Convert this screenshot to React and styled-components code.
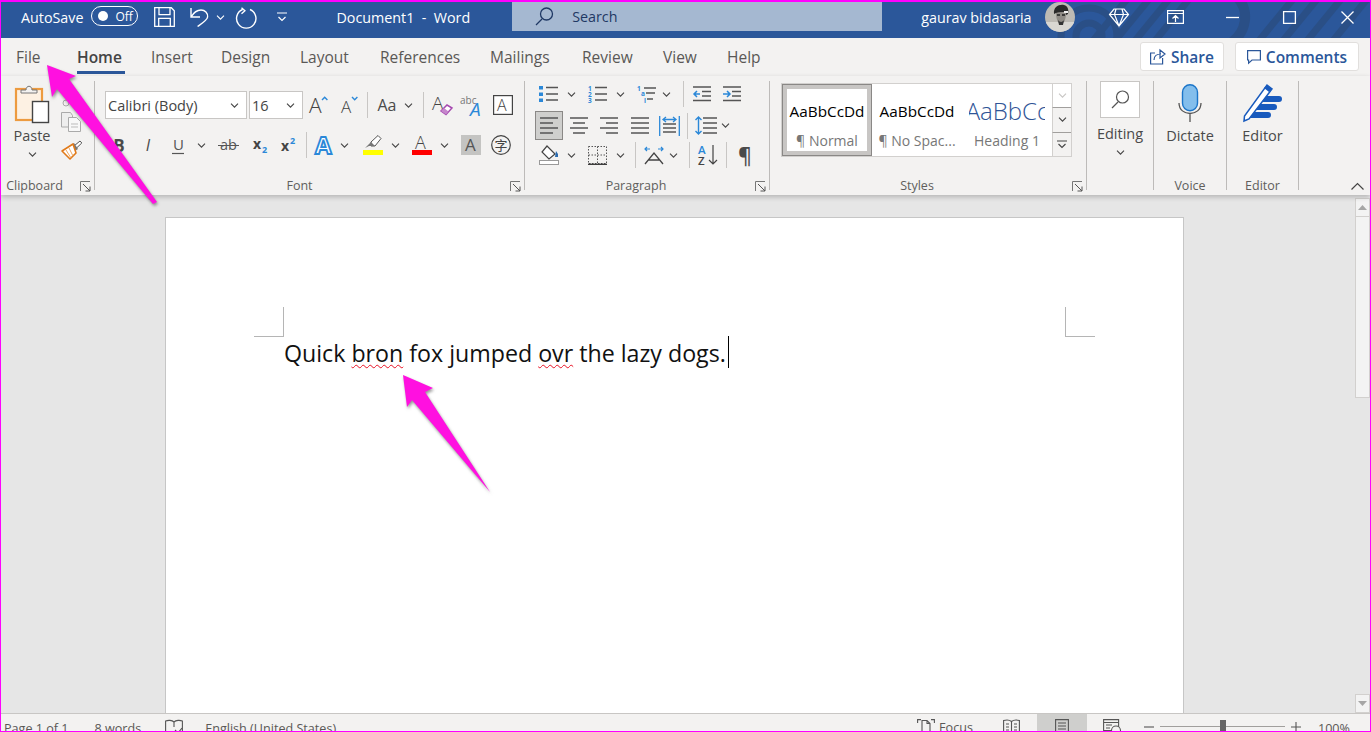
import React from 'react';
import styled, { createGlobalStyle } from 'styled-components';

const UI_FONT = '"Open Sans", "Noto Sans", sans-serif';
const BLUE = '#2B579A';
const ACCENT = '#2B88D8';
const INK = '#4a4a4a';

const GlobalStyle = createGlobalStyle`
  html, body {
    margin: 0;
    padding: 0;
    background: #fff;
  }
  * {
    box-sizing: border-box;
  }
`;

const Frame = styled.div`
  width: 1371px;
  height: 732px;
  position: relative;
  display: flex;
  flex-direction: column;
  overflow: hidden;
  border: 1px solid #f0f;
  border-top-width: 2px;
  font-family: ${UI_FONT};
  color: ${INK};
  background: #e6e6e6;
`;

/* title bar */
const TitleBar = styled.div`
  position: relative;
  height: 36px;
  flex: none;
  display: flex;
  align-items: flex-start;
  background: ${BLUE};
  color: #fff;
  font-size: 14.3px;
`;

const TitleDecor = styled.svg`
  position: absolute;
  right: 0;
  top: 0;
`;

const TitleItem = styled.div`
  position: relative;
  flex: none;
  display: flex;
  align-items: center;
  justify-content: center;
  height: 30px;
  width: ${(p) => (p.$w ? `${p.$w}px` : 'auto')};
  margin-left: ${(p) => p.$ml || 0}px;
  white-space: nowrap;
`;

const Toggle = styled.div`
  position: relative;
  flex: none;
  margin: 4px 0 0 8px;
  width: 47px;
  height: 20px;
  border: 1px solid #fff;
  border-radius: 10px;
  display: flex;
  align-items: center;
  padding-left: 6px;
  gap: 7px;
  font-size: 12px;
`;

const ToggleKnob = styled.span`
  width: 10px;
  height: 10px;
  border-radius: 50%;
  background: #fff;
`;

const SearchBox = styled.div`
  position: relative;
  flex: none;
  margin-left: 42px;
  width: 370px;
  height: 29px;
  background: #a5b8d1;
  color: #1f3864;
  display: flex;
  align-items: center;
  padding-left: 23px;
  gap: 18px;
  font-size: 14.3px;
`;

const Avatar = styled.div`
  position: relative;
  flex: none;
  width: 30px;
  height: 30px;
  margin-left: 13px;
  border-radius: 50%;
  overflow: hidden;
`;

/* tabs */
const TabRow = styled.div`
  height: 38px;
  flex: none;
  display: flex;
  background: #f3f2f1;
  padding-left: 15px;
`;

const Tab = styled.div`
  position: relative;
  flex: none;
  width: ${(p) => p.$w}px;
  height: 36px;
  margin-right: ${(p) => p.$gap}px;
  padding-top: 7px;
  font-size: 15.5px;
  line-height: 24px;
  white-space: nowrap;
  font-weight: ${(p) => (p.$active ? 600 : 400)};
  color: ${(p) => (p.$active ? '#444' : '#5a5856')};
  border-bottom: 3px solid ${(p) => (p.$active ? BLUE : 'transparent')};
`;

const TabActions = styled.div`
  margin-left: auto;
  margin-right: 11px;
  padding-top: 4px;
  display: flex;
  gap: 11px;
`;

const ActionButton = styled.div`
  width: ${(p) => p.$w}px;
  height: 29px;
  display: flex;
  align-items: center;
  justify-content: center;
  gap: 5px;
  background: #fff;
  border: 1px solid #e1dfdd;
  border-radius: 3px;
  color: ${BLUE};
  font-size: 15.5px;
  font-weight: 600;
`;

/* ribbon */
const Ribbon = styled.div`
  position: relative;
  z-index: 1;
  height: 119px;
  flex: none;
  display: flex;
  padding: 5px 0;
  background: #f3f2f1;
  box-shadow: 0 2px 5px rgba(0, 0, 0, 0.22);
`;

const Group = styled.div`
  flex: none;
  width: ${(p) => p.$w}px;
  height: 109px;
  display: flex;
  flex-direction: column;
  border-right: 1px solid #bdbbb9;
`;

const GroupBody = styled.div`
  flex: 1;
  min-height: 0;
  display: flex;
  flex-direction: ${(p) => p.$dir || 'column'};
  align-items: ${(p) => p.$align || 'stretch'};
`;

const GroupFooter = styled.div`
  flex: none;
  height: 18px;
  margin-bottom: -5px;
  display: flex;
  align-items: center;
`;

const GroupLabel = styled.div`
  flex: 1;
  text-align: center;
  font-size: 12.5px;
  line-height: 18px;
  color: #605e5c;
  padding-right: ${(p) => p.$pr || 0}px;
`;

const Launcher = styled.svg`
  flex: none;
  margin-right: ${(p) => p.$mr || 3}px;
`;

const ToolRow = styled.div`
  display: flex;
  align-items: center;
  height: ${(p) => p.$h}px;
  margin-top: ${(p) => p.$mt || 0}px;
`;

const Slot = styled.div`
  flex: none;
  display: flex;
  align-items: center;
  justify-content: center;
  width: ${(p) => p.$w}px;
  height: ${(p) => p.$h || 26}px;
  margin-left: ${(p) => p.$ml || 0}px;
  background: ${(p) => p.$bg || 'transparent'};
  border: ${(p) => (p.$active ? '1px solid #8a8886' : 'none')};
  font-size: ${(p) => p.$size || 15}px;
  font-weight: ${(p) => p.$weight || 400};
  font-style: ${(p) => (p.$italic ? 'italic' : 'normal')};
  color: ${(p) => p.$color || INK};
  white-space: nowrap;
`;

const RowSep = styled.div`
  flex: none;
  width: 1px;
  height: ${(p) => p.$h || 26}px;
  margin-left: ${(p) => p.$ml || 0}px;
  background: #c8c6c4;
`;

const FontSelect = styled.div`
  flex: none;
  width: ${(p) => p.$w}px;
  height: 28px;
  margin-left: ${(p) => p.$ml || 0}px;
  display: flex;
  align-items: center;
  justify-content: space-between;
  padding: 0 7px 0 2px;
  background: #fff;
  border: 1px solid #c8c6c4;
  font-size: 14.5px;
  color: #444;
`;

const StackColumn = styled.div`
  flex: none;
  display: flex;
  flex-direction: column;
  align-items: center;
  width: ${(p) => p.$w}px;
  margin-left: ${(p) => p.$ml || 0}px;
  padding-top: ${(p) => p.$pt || 0}px;
`;

const BigLabel = styled.div`
  font-size: 14.5px;
  line-height: 20px;
  color: ${INK};
  margin-top: ${(p) => p.$mt || 0}px;
`;

const SearchTile = styled.div`
  width: 40px;
  height: 37px;
  display: flex;
  align-items: center;
  justify-content: center;
  background: #fff;
  border: 1px solid #c8c6c4;
`;

const Gallery = styled.div`
  display: flex;
  width: 291px;
  height: 74px;
  margin: 2px 0 0 11px;
  background: #fff;
  border: 1px solid #d2d0ce;
`;

const StyleCard = styled.div`
  flex: none;
  width: ${(p) => p.$w}px;
  margin-left: ${(p) => p.$ml || 0}px;
  overflow: hidden;
  display: flex;
  flex-direction: column;
  align-items: center;
  background: #fff;
  padding-top: ${(p) => (p.$selected ? 14 : 15)}px;
  border: ${(p) => (p.$selected ? '1px solid #8a8886' : 'none')};
  outline: ${(p) => (p.$selected ? '4px solid #c8c6c4' : 'none')};
  outline-offset: -5px;
`;

const StyleSample = styled.div`
  height: 24px;
  line-height: 24px;
  white-space: nowrap;
  font-size: ${(p) => p.$size || 15.3}px;
  font-weight: ${(p) => p.$weight || 400};
  color: ${(p) => p.$color || '#000'};
`;

const StyleName = styled.div`
  margin-top: 8px;
  line-height: 20px;
  font-size: 14px;
  white-space: nowrap;
  color: #777;
`;

const GalleryScroll = styled.div`
  flex: none;
  margin-left: auto;
  width: 19px;
  display: flex;
  flex-direction: column;
`;

const GalleryButton = styled.div`
  flex: 1;
  display: flex;
  align-items: center;
  justify-content: center;
  border-left: 1px solid #d2d0ce;
  border-top: ${(p) => (p.$first ? 'none' : '1px solid #a19f9d')};
  background: ${(p) => (p.$first ? '#fff' : '#f3f2f1')};
`;

const CollapseZone = styled.div`
  flex: 1;
  display: flex;
  justify-content: flex-end;
  align-items: flex-end;
  padding: 0 6px 0 0;
`;

/* document */
const Workspace = styled.div`
  flex: 1;
  min-height: 0;
  display: flex;
  overflow: hidden;
`;

const PageArea = styled.div`
  flex: 1;
  padding: 22px 0 0 164px;
`;

const Page = styled.div`
  width: 1019px;
  height: 520px;
  background: #fff;
  border: 1px solid #c6c6c6;
  padding: 89px 88px 0;
`;

const CropRow = styled.div`
  display: flex;
  justify-content: space-between;
`;

const CropMark = styled.div`
  width: 30px;
  height: 30px;
  border-bottom: 1px solid #b5b5b5;
  border-right: ${(p) => (p.$side === 'left' ? '1px solid #b5b5b5' : 'none')};
  border-left: ${(p) => (p.$side === 'right' ? '1px solid #b5b5b5' : 'none')};
`;

const BodyText = styled.div`
  padding-left: 30px;
  margin-top: -1px;
  height: 34px;
  display: flex;
  align-items: center;
  font-size: 23.2px;
  line-height: 34px;
  color: #111;
  white-space: pre;
`;

const Misspelled = styled.span`
  text-decoration: underline wavy #e81123 1px;
  text-underline-offset: 2px;
`;

const Caret = styled.span`
  width: 1px;
  height: 32px;
  margin: -2px 0 0 2px;
  background: #000;
`;

const ScrollBar = styled.div`
  flex: none;
  width: 15px;
  padding-top: 3px;
  display: flex;
  flex-direction: column;
`;

const ScrollArrow = styled.div`
  flex: none;
  height: 19px;
  display: flex;
  align-items: center;
  justify-content: center;
  background: #f3f3f3;
  border: 1px solid #d2d0ce;
`;

const ScrollThumb = styled.div`
  flex: none;
  height: 181px;
  background: #f3f3f3;
  border: 1px solid #d2d0ce;
  border-top: none;
`;

const ScrollTrack = styled.div`
  flex: 1;
`;

/* status bar */
const StatusBar = styled.div`
  height: 18px;
  flex: none;
  display: flex;
  overflow: hidden;
  background: #f3f2f1;
  border-top: 1px solid #c8c6c4;
  font-size: 12.6px;
  color: #5a5856;
`;

const StatusItem = styled.div`
  flex: none;
  display: flex;
  align-items: flex-start;
  gap: 4px;
  height: 30px;
  padding-top: ${(p) => (p.$icon ? 5 : 6)}px;
  line-height: 17px;
  margin-left: ${(p) => p.$ml || 0}px;
  white-space: nowrap;
`;

const ViewButton = styled.div`
  flex: none;
  width: ${(p) => p.$w}px;
  height: 18px;
  margin-left: ${(p) => p.$ml || 0}px;
  display: flex;
  justify-content: center;
  padding-top: 5px;
  background: ${(p) => (p.$active ? '#cfcfcd' : 'transparent')};
`;

const ZoomTrack = styled.div`
  position: relative;
  flex: none;
  width: 125px;
  height: 1px;
  margin: 12px 0 0 6px;
  background: #a19f9d;
`;

const ZoomThumb = styled.div`
  position: absolute;
  left: 60px;
  top: -6px;
  width: 6px;
  height: 14px;
  background: #666;
`;

/* annotations */
const Annotations = styled.svg`
  position: absolute;
  left: -1px;
  top: -2px;
  z-index: 5;
  pointer-events: none;
  filter: drop-shadow(1px 2px 1.5px rgba(60, 60, 60, 0.55));
`;

const Svg = styled.svg`
  display: block;
  flex: none;
  overflow: visible;
`;

const Chevron = ({ color = '#444' }) => (
  <Svg width="9" height="5" viewBox="0 0 9 5">
    <path d="M1 .7l3.5 3.5L8 .7" fill="none" stroke={color} strokeWidth="1.1" />
  </Svg>
);

const Corner = ({ mr }) => (
  <Launcher $mr={mr} width="11" height="11" viewBox="0 0 11 11">
    <path d="M.5 10V.5H10" fill="none" stroke="#777" />
    <path d="M3 3l7 7M10 5.5V10H5.5" fill="none" stroke="#555" />
  </Launcher>
);

const Strokes = ({ w, h, d, color = '#555', width = 1.3, children }) => (
  <Svg width={w} height={h} viewBox={`0 0 ${w} ${h}`}>
    <path d={d} fill="none" stroke={color} strokeWidth={width} />
    {children}
  </Svg>
);

const LetterA = ({ x, y, size = 20, fill = '#444', weight = 300 }) => (
  <text x={x} y={y} fontFamily={UI_FONT} fontSize={size} fontWeight={weight} fill={fill}>
    A
  </text>
);

const SaveIcon = () => (
  <Strokes w={21} h={20} color="#fff" d="M.7.7h16.6l3 3v15.6H.7zM5 .7v7h11v-7M4.7 19.3v-8h11.6v8" />
);

const UndoIcon = () => (
  <Strokes w={20} h={20} color="#fff" width={1.4} d="M2 1v9h9M2 10c3-5 6-7 10-7 4 0 7 3 6.600 7-.3 3-5 6-10 9.500" />
);

const RedoIcon = () => (
  <Strokes w={22} h={21} color="#fff" width={1.4} d="M14 2.500a9.700 9.700 0 1 1-7.500 0M5.500 .8l3.400 3-3.400 3" />
);

const CustomizeIcon = () => (
  <Strokes w={10} h={10} color="#fff" width={1.2} d="M0 1h10M1.500 5l3.500 3.500L8.500 5" />
);

const CustomizeIconDark = () => (
  <Strokes w={10} h={9} color="#444" width={1.1} d="M0 1h10M1.500 4l3.500 3.500L8.500 4" />
);

const SearchIcon = () => (
  <Strokes w={19} h={19} color="#1f3864" width={1.3} d="M1 18l6-6">
    <circle cx="11.500" cy="7" r="6" fill="none" stroke="#1f3864" strokeWidth="1.300" />
  </Strokes>
);

const DiamondIcon = () => (
  <Strokes w={20} h={19} color="#fff" width={1.2} d="M5 1h10l4.500 5.500L10 18 .5 6.500zM.5 6.500h19M7 1L5.500 6.500 10 18l4.500-11.500L13 1" />
);

const DisplayIcon = () => (
  <Strokes w={17} h={14} color="#fff" width={1.2} d="M.6.6h15.800v12.800H.6zM.6 3.500h15.800M8.500 12V6M5.500 8.500l3-3 3 3" />
);

const WindowControl = ({ kind }) => {
  if (kind === 'min') return <Strokes w={13} h={13} color="#fff" d="M0 6.500h13" />;
  if (kind === 'max') return <Strokes w={13} h={13} color="#fff" d="M.6.6h11.800v11.800H.6z" />;
  return <Strokes w={13} h={13} color="#fff" d="M.5.500l12 12M12.500.5l-12 12" />;
};

const AvatarArt = () => (
  <Svg width="30" height="30" viewBox="0 0 30 30">
    <rect width="30" height="30" fill="#bdbab4" />
    <rect x="0" y="20" width="30" height="10" fill="#d9d7d2" />
    <path d="M9 12C8 5 14 2 19 3c4 1 5 5 4 9l-2 1-1-3-9 1z" fill="#2a2a2a" />
    <path d="M11 11c3-1 7-1 10 0 0 6-2 11-5 11-3 0-5-5-5-11z" fill="#8f8b85" />
    <path d="M13 18c2 3 5 2 6 0l-1 5h-4z" fill="#333" />
    <path d="M12 13h3M17 13h3" stroke="#222" strokeWidth="1.500" />
    <rect x="19" y="9" width="4" height="2" fill="#eee" />
  </Svg>
);

const ShareIcon = () => (
  <Strokes w={16} h={16} color={BLUE} width={1.2} d="M5 4H.6v11h12V9M4 11c0-4 3-6 7-6M10 1l5 4-5 4z" />
);

const CommentIcon = () => (
  <Strokes w={14} h={14} color={BLUE} width={1.2} d="M.6.6h12.800v9.400H5L1.600 13.200V10H.6z" />
);

const PasteIcon = () => (
  <Svg width="34" height="38" viewBox="0 0 34 38">
    <rect x="1" y="4" width="26" height="31" fill="#fdf1e3" stroke="#ed9b40" strokeWidth="2.200" />
    <path d="M6 8V5h5c0-5 6-5 6 0h5v3z" fill="#f3f2f1" stroke="#777" />
    <rect x="17.500" y="16.500" width="16" height="21" fill="#fff" stroke="#444" strokeWidth="1.400" />
  </Svg>
);

const CutIcon = () => (
  <Strokes w={20} h={20} color="#aaa" d="M6 1l8 11M14 1L6 12">
    <circle cx="5" cy="15" r="3" fill="none" stroke="#aaa" />
    <circle cx="15" cy="15" r="3" fill="none" stroke="#aaa" />
  </Strokes>
);

const CopyIcon = () => (
  <Svg width="20" height="20" viewBox="0 0 20 20">
    <path d="M.5.500h9l2 3V15H.5z" fill="#eee" stroke="#aaa" />
    <path d="M7.500 5.500h8l4 4v10h-12z" fill="#f8f8f8" stroke="#aaa" />
    <path d="M10 12h7M10 15h7" stroke="#bbb" />
  </Svg>
);

const BrushIcon = () => (
  <Svg width="21" height="19" viewBox="0 0 21 19">
    <path d="M13 5l6-5 1.800 2-5.800 5.500z" fill="#fff" stroke="#555" />
    <path d="M10 4l3-2 4 6-3 2z" fill="#777" />
    <path d="M1 10l11-7 3 9-6 6z" fill="#fff" stroke="#e07a1a" strokeWidth="1.600" strokeLinejoin="round" />
    <path d="M5 9l5 8M8 7l4 8" stroke="#f0a860" />
  </Svg>
);

const GrowFont = () => (
  <Svg width="20" height="20" viewBox="0 0 20 20">
    <LetterA x={0} y={18} size={21} />
    <path d="M13 5l2.700-2.700L18.400 5" fill="none" stroke={ACCENT} strokeWidth="1.400" />
  </Svg>
);

const ShrinkFont = () => (
  <Svg width="18" height="18" viewBox="0 0 18 18">
    <LetterA x={0} y={17} size={17} />
    <path d="M11 1l2.700 2.700L16.400 1" fill="none" stroke={ACCENT} strokeWidth="1.400" />
  </Svg>
);

const ClearFormat = () => (
  <Svg width="21" height="21" viewBox="0 0 21 21">
    <LetterA x={0} y={15} size={19} />
    <path d="M9 16l6-6 5 3-6 6.500z" fill="#fff" stroke="#a64ab0" strokeWidth="1.500" />
    <path d="M9 16l3-3 4.500 3.500-2.500 3z" fill="#c586cc" />
  </Svg>
);

const TextEffect = () => (
  <Svg width="22" height="21" viewBox="0 0 22 21">
    <text x="0" y="9" fontFamily={UI_FONT} fontSize="10" fill="#777">abc</text>
    <text x="10" y="21" fontFamily={UI_FONT} fontSize="19" fontStyle="italic" fill={ACCENT}>A</text>
  </Svg>
);

const BoxedA = () => (
  <Svg width="20" height="20" viewBox="0 0 20 20">
    <rect x=".6" y=".6" width="18.800" height="18.800" fill="#fff" stroke="#444" strokeWidth="1.200" />
    <LetterA x={4} y={16} size={16} />
  </Svg>
);

const SubScript = () => (
  <Svg width="16" height="18" viewBox="0 0 16 18">
    <text x="0" y="13" fontFamily={UI_FONT} fontSize="14" fontWeight="700" fill="#444">x</text>
    <text x="9" y="17" fontFamily={UI_FONT} fontSize="9" fontWeight="700" fill={ACCENT}>2</text>
  </Svg>
);

const SuperScript = () => (
  <Svg width="16" height="18" viewBox="0 0 16 18">
    <text x="0" y="15" fontFamily={UI_FONT} fontSize="14" fontWeight="700" fill="#444">x</text>
    <text x="9" y="8" fontFamily={UI_FONT} fontSize="9" fontWeight="700" fill={ACCENT}>2</text>
  </Svg>
);

const Strike = () => (
  <Svg width="21" height="16" viewBox="0 0 21 16">
    <text x="2" y="13" fontFamily={UI_FONT} fontSize="14.500" fill="#555">ab</text>
    <path d="M0 8.500h21" stroke="#555" />
  </Svg>
);

const Underlined = () => (
  <Svg width="12" height="19" viewBox="0 0 12 19">
    <text x="1" y="14" fontFamily={UI_FONT} fontSize="15" fill="#555">U</text>
    <path d="M0 17.500h12" stroke="#555" strokeWidth="1.200" />
  </Svg>
);

const OutlinedA = () => (
  <Svg width="20" height="20" viewBox="0 0 20 20">
    <text x="0" y="19" fontFamily={UI_FONT} fontSize="24" fontWeight="700" fill="#fff" stroke={ACCENT} strokeWidth="1.800">A</text>
  </Svg>
);

const Highlight = () => (
  <Svg width="20" height="20" viewBox="0 0 20 20">
    <path d="M8 7l7-6.500 3 3L12 11H8z" fill="#fff" stroke="#555" />
    <path d="M2 13l6-6 4 4H6z" fill="#777" />
    <rect y="15" width="20" height="5" fill="#ff0" />
  </Svg>
);

const FontColor = () => (
  <Svg width="20" height="20" viewBox="0 0 20 20">
    <LetterA x={3} y={14} size={18} />
    <rect y="15" width="20" height="5" fill="#f00" />
  </Svg>
);

const Shaded = () => (
  <Svg width="20" height="20" viewBox="0 0 20 20">
    <rect width="20" height="20" fill="#c4c4c2" />
    <LetterA x={4} y={16} size={17} weight={400} fill="#555" />
  </Svg>
);

const Enclosed = () => (
  <Svg width="20" height="20" viewBox="0 0 20 20">
    <circle cx="10" cy="10" r="9.300" fill="none" stroke="#444" strokeWidth="1.200" />
    <text x="3.500" y="15" fontFamily='"Noto Sans CJK SC", sans-serif' fontSize="13" fill="#444">字</text>
  </Svg>
);

const ListIcon = ({ kind }) => (
  <Svg width="20" height="19" viewBox="0 0 20 19">
    <path d={kind === 'multi' ? 'M7 3h12M9 8h9M10 14h6' : 'M7 2.500h12M7 9h12M7 15h12'} stroke="#555" strokeWidth="1.300" fill="none" />
    {kind === 'bullet' && (
      <path d="M0 1h4v3.500H0zM0 7.500h4V11H0zM0 13.500h4V17H0z" fill={ACCENT} />
    )}
    {kind === 'number' && (
      <>
        <text x="0" y="6" fontFamily={UI_FONT} fontWeight="700" fontSize="6.500" fill={ACCENT}>1</text>
        <text x="0" y="12" fontFamily={UI_FONT} fontWeight="700" fontSize="6.500" fill={ACCENT}>2</text>
        <text x="0" y="18" fontFamily={UI_FONT} fontWeight="700" fontSize="6.500" fill={ACCENT}>3</text>
      </>
    )}
    {kind === 'multi' && (
      <>
        <text x="0" y="6" fontFamily={UI_FONT} fontWeight="700" fontSize="6.500" fill={ACCENT}>1</text>
        <text x="4" y="11" fontFamily={UI_FONT} fontWeight="700" fontSize="6.500" fill={ACCENT}>a</text>
        <text x="7" y="18" fontFamily={UI_FONT} fontWeight="700" fontSize="6.500" fill={ACCENT}>i</text>
      </>
    )}
  </Svg>
);

const IndentIcon = ({ forward }) => (
  <Svg width="18" height="16" viewBox="0 0 18 16">
    <path d="M0 1.500h18M9 6h9M9 10.500h9M0 15h18" stroke="#555" strokeWidth="1.300" fill="none" transform="translate(0 -.5)" />
    <path
      d={forward ? 'M0 8h6M4 5l3 3-3 3' : 'M7 8H1M4 5L1 8l3 3'}
      stroke={ACCENT}
      strokeWidth="1.500"
      fill="none"
    />
  </Svg>
);

const ALIGN_PATHS = {
  left: 'M0 1h18M0 6h13M0 11h18M0 16h13',
  center: 'M0 1h18M3 6h12M0 11h18M3 16h12',
  right: 'M0 1h18M6 6h12M0 11h18M6 16h12',
  justify: 'M0 1h18M0 6h18M0 11h18M0 16h18',
};

const AlignIcon = ({ kind, w = 18 }) => (
  <Strokes w={w} h={17} color="#555" width={1.4} d={ALIGN_PATHS[kind]} />
);

const Distributed = () => (
  <Svg width="21" height="20" viewBox="0 0 21 20">
    <path d="M4 8h13M4 12h13M4 16h13" stroke="#555" strokeWidth="1.300" />
    <path d="M.7 0v20M20.300 0v20M4 3.500h13M7 1L4 3.500 7 6M14 1l3 2.500L14 6" stroke={ACCENT} strokeWidth="1.300" fill="none" />
  </Svg>
);

const LineSpacing = () => (
  <Svg width="22" height="19" viewBox="0 0 22 19">
    <path d="M8 2h14M8 7h14M8 12h14M8 17h14" stroke="#555" strokeWidth="1.300" />
    <path d="M3.500 1v17M.5 4l3-3 3 3M.5 15l3 3 3-3" stroke={ACCENT} strokeWidth="1.400" fill="none" />
  </Svg>
);

const Shading = () => (
  <Svg width="20" height="20" viewBox="0 0 20 20">
    <path d="M8 1l8 8-6 5-7-7z" fill="#fff" stroke="#444" strokeWidth="1.200" />
    <path d="M17 6l2 3v3h-3z" fill="#2b6cb0" />
    <rect x=".5" y="15.500" width="19" height="4" fill="#fff" stroke="#999" />
  </Svg>
);

const BordersIcon = () => (
  <Svg width="19" height="19" viewBox="0 0 19 19">
    <path d="M.5.500h18v17H.5zM9.500.5v17M.5 9h18" fill="none" stroke="#555" strokeDasharray="1.500 1.500" />
    <path d="M0 18.300h19" stroke="#333" strokeWidth="1.300" />
  </Svg>
);

const AsianLayout = () => (
  <Svg width="20" height="19" viewBox="0 0 20 19">
    <path d="M1 18L10 7l9 11M4 14h12" stroke="#444" strokeWidth="1.300" fill="none" />
    <path d="M1 3h5M3 1L1 3l2 2M14 3h5M17 1l2 2-2 2" stroke={ACCENT} strokeWidth="1.200" fill="none" />
  </Svg>
);

const SortIcon = () => (
  <Svg width="21" height="22" viewBox="0 0 21 22">
    <text x="0" y="10" fontFamily={UI_FONT} fontSize="11.500" fontWeight="600" fill={ACCENT}>A</text>
    <text x="0" y="21" fontFamily={UI_FONT} fontSize="11.500" fontWeight="600" fill="#444">Z</text>
    <path d="M15 1v19M11 16l4 4 4-4" stroke="#444" strokeWidth="1.200" fill="none" />
  </Svg>
);

const MagnifierIcon = () => (
  <Strokes w={19} h={19} color="#555" width={1.2} d="M1 18l6-6">
    <circle cx="11.500" cy="7" r="6" fill="none" stroke="#555" strokeWidth="1.200" />
  </Strokes>
);

const MicIcon = () => (
  <Svg width="24" height="39" viewBox="0 0 24 39">
    <rect x="4.500" y=".7" width="15" height="26" rx="7.500" fill="#83beec" stroke="#1b75c9" strokeWidth="1.400" />
    <path d="M1 19c0 14 22 14 22 0M12 29v9" fill="none" stroke="#555" strokeWidth="1.300" />
  </Svg>
);

const EditorIcon = () => (
  <Svg width="40" height="39" viewBox="0 0 40 39">
    <path d="M19 12h17a2.500 2.500 0 0 1 0 6H15zM13 20h18a2.500 2.500 0 0 1 0 6H9zM7 28h18a2.500 2.500 0 0 1 0 6H3z" fill="#185abd" />
    <path d="M24 1l5 4L6 35l-5 2 .5-5z" fill="#fff" stroke="#185abd" strokeWidth="1.500" />
    <path d="M24 1l5 4-3 3-5-4z" fill="#185abd" />
  </Svg>
);

const Triangle = ({ up }) => (
  <Svg width="9" height="5" viewBox="0 0 9 5">
    <path d={up ? 'M0 5l4.500-5L9 5z' : 'M0 0l4.500 5L9 0z'} fill="#a6a6a6" />
  </Svg>
);

const ProofIcon = () => (
  <Strokes w={18} h={16} color="#555" width={1.1} d="M9 3C7 1 3 1 .6 2v12c3-1 6-1 8.400 1 2-2 5-2 8.400-1V2C15 1 11 1 9 3zM9 3v5M10 11l3 3 4-5" />
);

const FocusIcon = () => (
  <Strokes w={18} h={16} color="#555" width={1.1} d="M.6 4V.6H4M14 .6h3.400V4M5 1.500h5l3 3V16H5zM10 1.500v3h3" />
);

const ReadIcon = () => (
  <Strokes w={17} h={15} color="#555" width={1.1} d="M8.500 2.500C6.500 .8 3 .8.600 1.500v13h7.900M8.500 2.500c2-1.700 5.500-1.700 7.900-1v13H8.500zM8.500 2.500v12M3 5h3M3 8h3M3 11h3M11 5h3M11 8h3M11 11h3" />
);

const PrintIcon = () => (
  <Strokes w={14} h={15} color="#555" width={1.1} d="M.6.600h12.800v14H.6zM3 4h8M3 7h8M3 10h8" />
);

const WebIcon = () => (
  <Strokes w={18} h={15} color="#555" width={1.1} d="M.6.600h15v11H.6zM.6 3.500h15M3 6h6M3 9h4">
    <circle cx="13" cy="11.500" r="4.500" fill="#f3f2f1" stroke="#555" strokeWidth="1.100" />
  </Strokes>
);

const TABS = [
  { name: 'File', w: 26, gap: 35 },
  { name: 'Home', w: 48, gap: 26, active: true },
  { name: 'Insert', w: 44, gap: 26 },
  { name: 'Design', w: 53, gap: 26 },
  { name: 'Layout', w: 54, gap: 26 },
  { name: 'References', w: 84, gap: 26 },
  { name: 'Mailings', w: 66, gap: 26 },
  { name: 'Review', w: 55, gap: 26 },
  { name: 'View', w: 38, gap: 26 },
  { name: 'Help', w: 36, gap: 0 },
];

const STYLE_CARDS = [
  { sample: 'AaBbCcDd', name: '¶ Normal', w: 90, selected: true },
  { sample: 'AaBbCcDd', name: '¶ No Spac...', w: 80, ml: 5 },
  { sample: 'AaBbCc', name: 'Heading 1', w: 76, ml: 12, size: 24, color: '#2f5496', weight: 300 },
];

export default function App() {
  return (
    <Frame>
      <GlobalStyle />
      <TitleBar>
        <TitleDecor width="492" height="36" viewBox="0 0 492 36">
          <g fill="none" stroke="#2a4f86" strokeWidth="7">
            <circle cx="211" cy="34" r="13" />
            <circle cx="211" cy="34" r="28" />
            <path d="M250-4l-36 44M272-4l-36 44M292-4l-36 44M312-4l-36 44" />
            <path d="M360-4c12 14 8 34-6 44" strokeWidth="10" />
            <path d="M416-4l-36 44M440-4l-36 44M464-4l-36 44M490-4l-36 44" />
          </g>
        </TitleDecor>
        <TitleItem $ml={20}>AutoSave</TitleItem>
        <Toggle>
          <ToggleKnob />
          Off
        </Toggle>
        <TitleItem $ml={16}><SaveIcon /></TitleItem>
        <TitleItem $ml={14}><UndoIcon /></TitleItem>
        <TitleItem $ml={7}><Chevron color="#fff" /></TitleItem>
        <TitleItem $ml={11}><RedoIcon /></TitleItem>
        <TitleItem $ml={19}><CustomizeIcon /></TitleItem>
        <TitleItem $ml={49}>Document1&nbsp; -&nbsp; Word</TitleItem>
        <SearchBox>
          <SearchIcon />
          Search
        </SearchBox>
        <TitleItem $ml={39}>gaurav bidasaria</TitleItem>
        <Avatar><AvatarArt /></Avatar>
        <TitleItem $ml={34}><DiamondIcon /></TitleItem>
        <TitleItem $ml={38}><DisplayIcon /></TitleItem>
        <TitleItem $ml={42}><WindowControl kind="min" /></TitleItem>
        <TitleItem $ml={44}><WindowControl kind="max" /></TitleItem>
        <TitleItem $ml={45}><WindowControl kind="close" /></TitleItem>
      </TitleBar>

      <TabRow>
        {TABS.map((tab) => (
          <Tab key={tab.name} $w={tab.w} $gap={tab.gap} $active={tab.active}>
            {tab.name}
          </Tab>
        ))}
        <TabActions>
          <ActionButton $w={84}><ShareIcon />Share</ActionButton>
          <ActionButton $w={124}><CommentIcon />Comments</ActionButton>
        </TabActions>
      </TabRow>

      <Ribbon>
        <Group $w={94}>
          <GroupBody $dir="row">
            <StackColumn $w={44} $ml={9} $pt={4}>
              <PasteIcon />
              <BigLabel $mt={3}>Paste</BigLabel>
              <Slot $w={12} $h={17}><Chevron /></Slot>
            </StackColumn>
            <StackColumn $w={22} $ml={6} $pt={7}>
              <CutIcon />
              <Slot $w={20} $h={27}><CopyIcon /></Slot>
              <Slot $w={21} $h={31}><BrushIcon /></Slot>
            </StackColumn>
          </GroupBody>
          <GroupFooter>
            <GroupLabel $pr={12}>Clipboard</GroupLabel>
            <Corner />
          </GroupFooter>
        </Group>

        <Group $w={430}>
          <GroupBody>
            <ToolRow $h={28} $mt={10}>
              <FontSelect $w={142} $ml={10}>Calibri (Body)<Chevron /></FontSelect>
              <FontSelect $w={54} $ml={2}>16<Chevron /></FontSelect>
              <Slot $w={32}><GrowFont /></Slot>
              <Slot $w={30}><ShrinkFont /></Slot>
              <RowSep $ml={2} />
              <Slot $w={30} $ml={4} $size={16}>Aa</Slot>
              <Slot $w={12} $ml={0}><Chevron /></Slot>
              <RowSep $ml={9} />
              <Slot $w={24} $ml={6}><ClearFormat /></Slot>
              <Slot $w={24} $ml={5}><TextEffect /></Slot>
              <Slot $w={20} $ml={10}><BoxedA /></Slot>
            </ToolRow>
            <ToolRow $h={30} $mt={11}>
              <Slot $w={28} $ml={10} $weight={700} $size={17}>B</Slot>
              <Slot $w={30} $italic $size={16}>I</Slot>
              <Slot $w={30}><Underlined /></Slot>
              <Slot $w={16}><Chevron /></Slot>
              <Slot $w={38}><Strike /></Slot>
              <Slot $w={28}><SubScript /></Slot>
              <Slot $w={28}><SuperScript /></Slot>
              <RowSep $ml={3} />
              <Slot $w={26} $ml={5}><OutlinedA /></Slot>
              <Slot $w={12}><Chevron /></Slot>
              <Slot $w={26} $ml={10}><Highlight /></Slot>
              <Slot $w={12} $ml={3}><Chevron /></Slot>
              <Slot $w={26} $ml={8}><FontColor /></Slot>
              <Slot $w={12} $ml={3}><Chevron /></Slot>
              <Slot $w={20} $ml={11}><Shaded /></Slot>
              <Slot $w={20} $ml={10}><Enclosed /></Slot>
            </ToolRow>
          </GroupBody>
          <GroupFooter>
            <GroupLabel $pr={6}>Font</GroupLabel>
            <Corner />
          </GroupFooter>
        </Group>

        <Group $w={245}>
          <GroupBody>
            <ToolRow $h={26}>
              <Slot $w={20} $ml={14}><ListIcon kind="bullet" /></Slot>
              <Slot $w={12} $ml={6}><Chevron /></Slot>
              <Slot $w={20} $ml={11}><ListIcon kind="number" /></Slot>
              <Slot $w={12} $ml={6}><Chevron /></Slot>
              <Slot $w={20} $ml={11}><ListIcon kind="multi" /></Slot>
              <Slot $w={12} $ml={3}><Chevron /></Slot>
              <RowSep $ml={11} />
              <Slot $w={18} $ml={9}><IndentIcon /></Slot>
              <Slot $w={18} $ml={12}><IndentIcon forward /></Slot>
            </ToolRow>
            <ToolRow $h={29} $mt={4}>
              <Slot $w={28} $h={29} $ml={10} $active $bg="#cfcfcd"><AlignIcon kind="left" /></Slot>
              <Slot $w={20} $ml={6}><AlignIcon kind="center" /></Slot>
              <Slot $w={20} $ml={10}><AlignIcon kind="right" /></Slot>
              <Slot $w={20} $ml={11}><AlignIcon kind="justify" /></Slot>
              <Slot $w={21} $ml={9}><Distributed /></Slot>
              <RowSep $ml={7} />
              <Slot $w={22} $ml={7}><LineSpacing /></Slot>
              <Slot $w={12} $ml={2}><Chevron /></Slot>
            </ToolRow>
            <ToolRow $h={26} $mt={2}>
              <Slot $w={20} $ml={14}><Shading /></Slot>
              <Slot $w={12} $ml={6}><Chevron /></Slot>
              <Slot $w={19} $ml={11}><BordersIcon /></Slot>
              <Slot $w={12} $ml={7}><Chevron /></Slot>
              <RowSep $ml={9} />
              <Slot $w={20} $ml={8}><AsianLayout /></Slot>
              <Slot $w={12} $ml={3}><Chevron /></Slot>
              <RowSep $ml={10} />
              <Slot $w={21} $ml={8}><SortIcon /></Slot>
              <RowSep $ml={7} />
              <Slot $w={18} $ml={9} $size={21} $weight={600}>¶</Slot>
            </ToolRow>
          </GroupBody>
          <GroupFooter>
            <GroupLabel $pr={8}>Paragraph</GroupLabel>
            <Corner />
          </GroupFooter>
        </Group>

        <Group $w={317}>
          <GroupBody>
            <Gallery>
              {STYLE_CARDS.map((card) => (
                <StyleCard key={card.name} $w={card.w} $ml={card.ml} $selected={card.selected}>
                  <StyleSample $size={card.size} $color={card.color} $weight={card.weight}>
                    {card.sample}
                  </StyleSample>
                  <StyleName>{card.name}</StyleName>
                </StyleCard>
              ))}
              <GalleryScroll>
                <GalleryButton $first><Chevron color="#c8c6c4" /></GalleryButton>
                <GalleryButton><Chevron /></GalleryButton>
                <GalleryButton><CustomizeIconDark /></GalleryButton>
              </GalleryScroll>
            </Gallery>
          </GroupBody>
          <GroupFooter>
            <GroupLabel $pr={8}>Styles</GroupLabel>
            <Corner />
          </GroupFooter>
        </Group>

        <Group $w={67}>
          <GroupBody $align="center">
            <SearchTile><MagnifierIcon /></SearchTile>
            <BigLabel $mt={6}>Editing</BigLabel>
            <Slot $w={12} $h={16}><Chevron /></Slot>
          </GroupBody>
        </Group>

        <Group $w={73}>
          <GroupBody $align="center">
            <StackColumn $w={60} $pt={3}>
              <MicIcon />
              <BigLabel $mt={3}>Dictate</BigLabel>
            </StackColumn>
          </GroupBody>
          <GroupFooter><GroupLabel>Voice</GroupLabel></GroupFooter>
        </Group>

        <Group $w={72}>
          <GroupBody $align="center">
            <StackColumn $w={60} $pt={3}>
              <EditorIcon />
              <BigLabel $mt={3}>Editor</BigLabel>
            </StackColumn>
          </GroupBody>
          <GroupFooter><GroupLabel>Editor</GroupLabel></GroupFooter>
        </Group>

        <CollapseZone>
          <Strokes w={13} h={7} color="#444" width={1.2} d="M.5 6.500l6-6 6 6" />
        </CollapseZone>
      </Ribbon>

      <Workspace>
        <PageArea>
          <Page>
            <CropRow>
              <CropMark $side="left" />
              <CropMark $side="right" />
            </CropRow>
            <BodyText>
              Quick <Misspelled>bron</Misspelled> fox jumped <Misspelled>ovr</Misspelled> the lazy dogs.
              <Caret />
            </BodyText>
          </Page>
        </PageArea>
        <ScrollBar>
          <ScrollArrow><Triangle up /></ScrollArrow>
          <ScrollThumb />
          <ScrollTrack />
          <ScrollArrow><Triangle /></ScrollArrow>
        </ScrollBar>
      </Workspace>

      <StatusBar>
        <StatusItem $ml={3}>Page 1 of 1</StatusItem>
        <StatusItem $ml={26}>8 words</StatusItem>
        <StatusItem $ml={24} $icon><ProofIcon /></StatusItem>
        <StatusItem $ml={22}>English (United States)</StatusItem>
        <StatusItem $ml={581} $icon>
          <FocusIcon />
          <span>Focus</span>
        </StatusItem>
        <ViewButton $w={17} $ml={30}><ReadIcon /></ViewButton>
        <ViewButton $w={50} $ml={17} $active><PrintIcon /></ViewButton>
        <ViewButton $w={18} $ml={16}><WebIcon /></ViewButton>
        <StatusItem $ml={23}>
          <Strokes w={10} h={12} color="#555" width={1.1} d="M0 7h10" />
        </StatusItem>
        <ZoomTrack><ZoomThumb /></ZoomTrack>
        <StatusItem $ml={6}>
          <Strokes w={10} h={12} color="#555" width={1.1} d="M0 7h10M5 2v10" />
        </StatusItem>
        <StatusItem $ml={17}>100%</StatusItem>
      </StatusBar>

      <Annotations width="1371" height="732" viewBox="0 0 1371 732">
        <path d="M47 65L76 76 69 79 157 202 153 204 57 89 52 97z" fill="#ff10e0" />
        <path d="M403 375L433 388 425 392 490 492 412 400 407 407z" fill="#ff10e0" />
      </Annotations>
    </Frame>
  );
}
